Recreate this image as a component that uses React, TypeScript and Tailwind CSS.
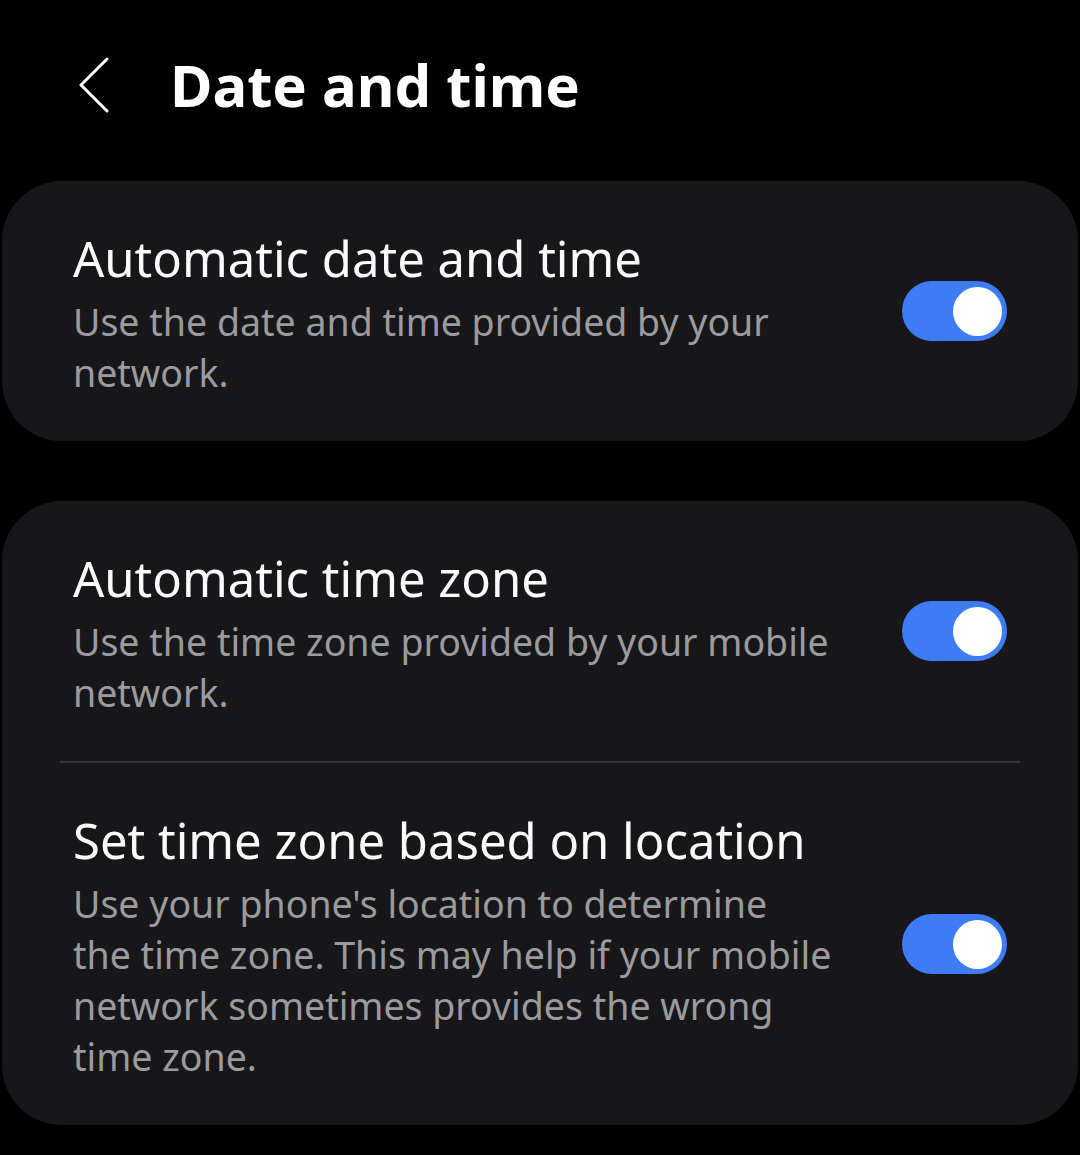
import React, { useState } from 'react';

interface SettingRowProps {
  title: string;
  lines: string[];
  checked: boolean;
  onToggle: () => void;
}

const Toggle: React.FC<{ checked: boolean; onToggle: () => void }> = ({ checked, onToggle }) => (
  <button
    onClick={onToggle}
    className={`relative shrink-0 mb-[5px] w-[105px] h-[60px] rounded-full transition ${checked ? 'bg-[#3e7cf6]' : 'bg-[#4a4a4e]'}`}
  >
    <span
      className={`absolute top-[5.5px] w-[49px] h-[49px] rounded-full bg-white transition-all ${checked ? 'left-[51px]' : 'left-[5px]'}`}
    />
  </button>
);

// description lines are kept as on the device, one block per line
const SettingRow: React.FC<SettingRowProps> = ({ title, lines, checked, onToggle }) => (
  <div className="flex items-center justify-between px-[71px] pt-[48px] pb-[43px]">
    <div className="w-[770px]">
      <div className="text-[49px] leading-[58px] text-[#fafafa] whitespace-nowrap">{title}</div>
      <div className="mt-[9px] text-[37.5px] leading-[51px] text-[#9b9b9f]">
        {lines.map((line) => (
          <div key={line} className="whitespace-nowrap">{line}</div>
        ))}
      </div>
    </div>
    <Toggle checked={checked} onToggle={onToggle} />
  </div>
);

export default function App() {
  const [autoDate, setAutoDate] = useState(true);
  const [autoZone, setAutoZone] = useState(true);
  const [locZone, setLocZone] = useState(true);

  return (
    <div className="w-[1080px] h-[1155px] bg-black overflow-hidden" style={{ fontFamily: '"Noto Sans", Roboto, sans-serif' }}>
      {/* Header */}
      <div className="flex items-center h-[170px] pl-[78px]">
        <svg width="32" height="56" viewBox="0 0 32 56" fill="none" className="shrink-0">
          <path d="M29 2 L3 28 L29 54" stroke="#ffffff" strokeWidth="3" strokeLinecap="round" strokeLinejoin="round" />
        </svg>
        <h1 className="ml-[60px] text-[58px] font-bold text-white leading-none">Date and time</h1>
      </div>

      <div className="mt-[11px] px-[2px] flex flex-col gap-[60px]">
        <div className="bg-[#171719] rounded-[60px]">
          <SettingRow
            title="Automatic date and time"
            lines={['Use the date and time provided by your', 'network.']}
            checked={autoDate}
            onToggle={() => setAutoDate(!autoDate)}
          />
        </div>

        <div className="bg-[#171719] rounded-[60px]">
          <SettingRow
            title="Automatic time zone"
            lines={['Use the time zone provided by your mobile', 'network.']}
            checked={autoZone}
            onToggle={() => setAutoZone(!autoZone)}
          />
          <div className="mx-[58px] h-[2px] bg-[#343437]" />
          <SettingRow
            title="Set time zone based on location"
            lines={[
              "Use your phone's location to determine",
              'the time zone. This may help if your mobile',
              'network sometimes provides the wrong',
              'time zone.',
            ]}
            checked={locZone}
            onToggle={() => setLocZone(!locZone)}
          />
        </div>
      </div>
    </div>
  );
}
